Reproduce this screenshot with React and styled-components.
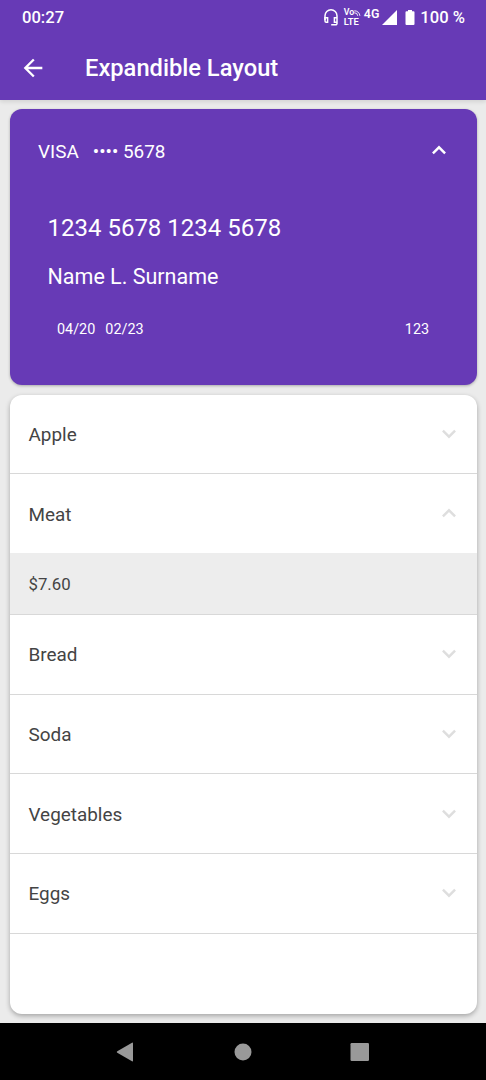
import React, { useState } from "react";
import styled, { createGlobalStyle } from "styled-components";

const GlobalStyle = createGlobalStyle`
  *, *::before, *::after { box-sizing: border-box; }
  body { margin: 0; font-family: Roboto, "Liberation Sans", sans-serif; background: #ebebeb; }
  button { font: inherit; color: inherit; background: none; border: 0; padding: 0; text-align: left; }
`;

const Screen = styled.div`
  width: 486px;
  height: 1080px;
  display: flex;
  flex-direction: column;
  overflow: hidden;
  background: #ebebeb;
`;

const Header = styled.header`
  height: 100px;
  flex: none;
  background: #673ab6;
  color: #fff;
  box-shadow: 0 2px 4px rgba(0, 0, 0, 0.1);
`;

const StatusBar = styled.div`
  height: 36px;
  padding: 0 21px 0 22px;
  display: flex;
  align-items: center;
  font-size: 16.6px;
  font-weight: 500;
  line-height: 20px;
`;

const StatusIcons = styled.div`
  margin-left: auto;
  display: flex;
  align-items: center;
`;

const StatusSvg = styled.svg`
  display: block;
  margin: -2px ${({ $gap }) => $gap}px 0 0;
`;

const VolteBadge = styled.div`
  width: 19px;
  font-size: 9.4px;
  font-weight: 600;
  line-height: 9px;
  margin: 0 1px 2px 0;
`;

const VolteTop = styled.div`
  display: flex;
  align-items: center;
  font-size: 8.8px;
`;

const NetworkType = styled.span`
  font-size: 12.4px;
  font-weight: 600;
  line-height: 12px;
  letter-spacing: 0.3px;
  margin: 0 2px 9px 0;
`;

const AppBar = styled.div`
  height: 63px;
  display: flex;
  align-items: center;
  padding-left: 19px;
`;

const BackButton = styled.button`
  width: 66px;
  height: 28px;
`;

const Title = styled.h1`
  margin: 0;
  font-size: 23.7px;
  font-weight: 500;
  line-height: 28px;
`;

const Content = styled.main`
  flex: 1;
  min-height: 0;
  padding: 9.4px 9.4px 9px 9.5px;
  display: flex;
  flex-direction: column;
  gap: 9.4px;
`;

const PaymentCard = styled.section`
  height: 275.8px;
  flex: none;
  border-radius: 12px;
  background: #673ab6;
  color: #fff;
  box-shadow: 0 1px 3px rgba(0, 0, 0, 0.28);
`;

const CardSummary = styled.button`
  width: 100%;
  height: 84px;
  padding: 0 24.5px 0 28.5px;
  display: flex;
  align-items: center;
  font-size: 18.9px;
`;

const Brand = styled.span`
  width: 54.8px;
`;

const CardDetails = styled.div`
  padding: 21px 38px 0;
`;

const CardNumber = styled.div`
  font-size: 24px;
  line-height: 29px;
`;

const Holder = styled.div`
  margin-top: 20px;
  font-size: 21.5px;
  line-height: 28px;
`;

const CardDates = styled.div`
  display: flex;
  gap: 10px;
  margin-top: 28px;
  padding: 0 9.5px;
  font-size: 14.4px;
  line-height: 21px;
`;

const SecurityCode = styled.span`
  margin-left: auto;
`;

const ItemList = styled.section`
  flex: 1;
  min-height: 0;
  overflow: hidden;
  border-radius: 12px;
  background: #fff;
  color: #444;
  box-shadow: 0 2px 5px rgba(0, 0, 0, 0.3);
`;

const Item = styled.div`
  border-bottom: 1px solid #d8d8d8;
`;

const ItemHeader = styled.button`
  width: 100%;
  height: 78.7px;
  padding: 0 14.5px 0 19px;
  display: flex;
  align-items: center;
  justify-content: space-between;
  font-size: 18.9px;
  line-height: 24px;
`;

const ItemName = styled.span`
  padding-top: 2px;
`;

const Price = styled.div`
  height: 61px;
  padding: 1px 0 0 19px;
  display: flex;
  align-items: center;
  background: #ededed;
  font-size: 16.8px;
`;

const ChevronSvg = styled.svg`
  display: block;
  flex: none;
  margin-left: auto;
  margin-bottom: ${({ $up }) => ($up ? "2px" : "0")};
  transform: ${({ $up }) => ($up ? "rotate(180deg)" : "none")};
`;

const NavBar = styled.nav`
  height: 57px;
  flex: none;
  display: flex;
  align-items: center;
  justify-content: space-between;
  padding: 0 115px;
  background: #000;
  color: #999;
`;

const NavButton = styled.button`
  width: 22px;
  height: 22px;
`;

function Chevron({ up, color, size = 26 }) {
  return (
    <ChevronSvg $up={up} width={size} height={size} viewBox="0 0 26 26" fill="none" stroke={color} strokeWidth="2.4">
      <path d="M6.9 9.6 13 15.7l6.1-6.1" />
    </ChevronSvg>
  );
}

const items = [
  { name: "Apple", price: "$2.30" },
  { name: "Meat", price: "$7.60" },
  { name: "Bread", price: "$1.80" },
  { name: "Soda", price: "$1.50" },
  { name: "Vegetables", price: "$3.20" },
  { name: "Eggs", price: "$2.90" },
];

export default function App() {
  const [cardOpen, setCardOpen] = useState(true);
  const [openItem, setOpenItem] = useState("Meat");

  return (
    <Screen>
      <GlobalStyle />
      <Header>
        <StatusBar>
          <span>00:27</span>
          <StatusIcons>
            <StatusSvg $gap={6} width="14" height="17" viewBox="0 0 14 17" fill="none" stroke="currentColor" strokeWidth="1.5">
              <path d="M1 11V6.8a6 6 0 0 1 12 0v7.6a1.4 1.4 0 0 1-1.4 1.4H7.2" />
              <path d="M1 8.8h2.6v4.4H2.2A1.2 1.2 0 0 1 1 12zM13 8.8h-2.6v4.4H13" />
            </StatusSvg>
            <VolteBadge>
              <VolteTop>
                <span>Vo</span>
                <svg width="7" height="6" viewBox="0 0 7 6" fill="none" stroke="currentColor" strokeWidth=".9">
                  <path d="M.3.8a5.4 5.4 0 0 1 5.6 5M.3 2.8a3.2 3.2 0 0 1 3.4 3" />
                </svg>
              </VolteTop>
              <div>LTE</div>
            </VolteBadge>
            <NetworkType>4G</NetworkType>
            <StatusSvg $gap={8} width="15" height="15" viewBox="0 0 15 15" fill="currentColor">
              <path d="M15 0v15H0z" />
            </StatusSvg>
            <StatusSvg $gap={5.5} width="10" height="15" viewBox="0 0 10 15" fill="currentColor">
              <path d="M3 0h4v1.2h1.5q1 0 1 1V14q0 1-1 1h-7q-1 0-1-1V2.2q0-1 1-1H3z" />
            </StatusSvg>
            <span>100 %</span>
          </StatusIcons>
        </StatusBar>
        <AppBar>
          <BackButton aria-label="Back">
            <svg width="28" height="28" viewBox="0 0 24 24" fill="currentColor">
              <path d="M20 11H7.83l5.59-5.59L12 4l-8 8 8 8 1.41-1.41L7.83 13H20v-2z" />
            </svg>
          </BackButton>
          <Title>Expandible Layout</Title>
        </AppBar>
      </Header>

      <Content>
        <PaymentCard>
          <CardSummary onClick={() => setCardOpen(!cardOpen)}>
            <Brand>VISA</Brand>
            <span>•••• 5678</span>
            <Chevron up={cardOpen} color="#fff" />
          </CardSummary>
          {cardOpen && (
            <CardDetails>
              <CardNumber>1234 5678 1234 5678</CardNumber>
              <Holder>Name L. Surname</Holder>
              <CardDates>
                <span>04/20</span>
                <span>02/23</span>
                <SecurityCode>123</SecurityCode>
              </CardDates>
            </CardDetails>
          )}
        </PaymentCard>

        <ItemList>
          {items.map(({ name, price }) => {
            const open = name === openItem;
            return (
              <Item key={name}>
                <ItemHeader onClick={() => setOpenItem(open ? null : name)}>
                  <ItemName>{name}</ItemName>
                  <Chevron up={open} color="#dedede" />
                </ItemHeader>
                {open && <Price>{price}</Price>}
              </Item>
            );
          })}
        </ItemList>
      </Content>

      <NavBar>
        <NavButton aria-label="Back">
          <svg width="22" height="22" viewBox="0 0 22 22" fill="currentColor">
            <path d="M17 1.7q1-.5 1 .6v17.4q0 1.1-1 .6L2.3 11.8q-1.2-.8 0-1.6z" />
          </svg>
        </NavButton>
        <NavButton aria-label="Home">
          <svg width="22" height="22" viewBox="0 0 22 22" fill="currentColor">
            <circle cx="11" cy="11" r="8.5" />
          </svg>
        </NavButton>
        <NavButton aria-label="Recent apps">
          <svg width="22" height="22" viewBox="0 0 22 22" fill="currentColor">
            <rect x="1.5" y="2" width="18.5" height="18" rx="1.2" />
          </svg>
        </NavButton>
      </NavBar>
    </Screen>
  );
}
